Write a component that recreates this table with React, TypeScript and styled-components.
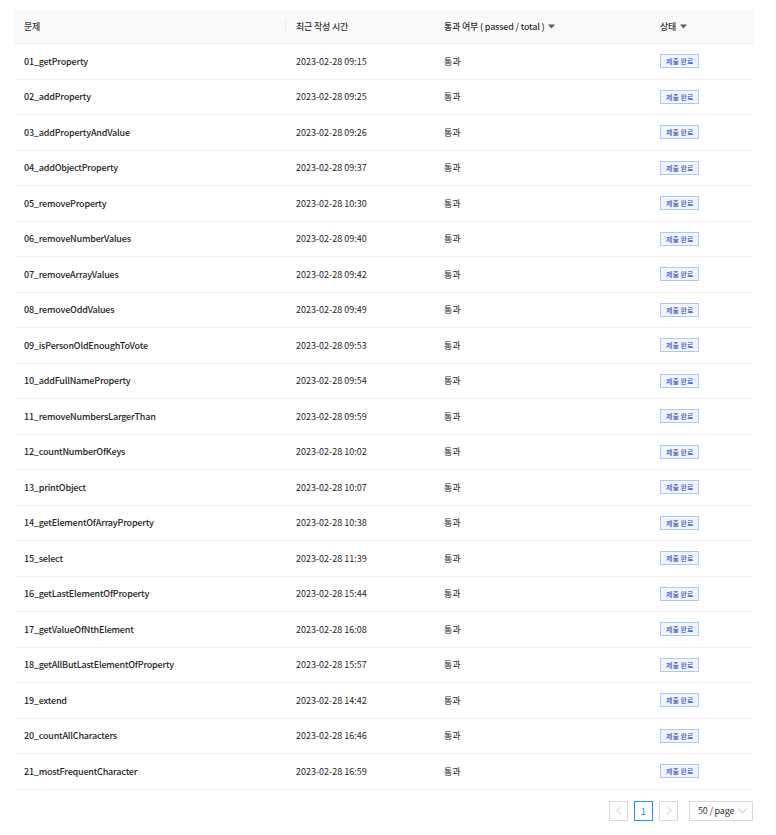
import React, { FC } from "react";
import styled, { createGlobalStyle } from "styled-components";

const rows: [string, string][] = [
  ["01_getProperty", "2023-02-28 09:15"],
  ["02_addProperty", "2023-02-28 09:25"],
  ["03_addPropertyAndValue", "2023-02-28 09:26"],
  ["04_addObjectProperty", "2023-02-28 09:37"],
  ["05_removeProperty", "2023-02-28 10:30"],
  ["06_removeNumberValues", "2023-02-28 09:40"],
  ["07_removeArrayValues", "2023-02-28 09:42"],
  ["08_removeOddValues", "2023-02-28 09:49"],
  ["09_isPersonOldEnoughToVote", "2023-02-28 09:53"],
  ["10_addFullNameProperty", "2023-02-28 09:54"],
  ["11_removeNumbersLargerThan", "2023-02-28 09:59"],
  ["12_countNumberOfKeys", "2023-02-28 10:02"],
  ["13_printObject", "2023-02-28 10:07"],
  ["14_getElementOfArrayProperty", "2023-02-28 10:38"],
  ["15_select", "2023-02-28 11:39"],
  ["16_getLastElementOfProperty", "2023-02-28 15:44"],
  ["17_getValueOfNthElement", "2023-02-28 16:08"],
  ["18_getAllButLastElementOfProperty", "2023-02-28 15:57"],
  ["19_extend", "2023-02-28 14:42"],
  ["20_countAllCharacters", "2023-02-28 16:46"],
  ["21_mostFrequentCharacter", "2023-02-28 16:59"],
];

const Caret: FC = () => (
  <svg width="7" height="5" viewBox="0 0 7 5">
    <path d="M0 0.5h7L3.5 4.5z" fill="#595959" />
  </svg>
);

const App: FC = () => (
  <>
    <GlobalStyle />
    <Page>
      <Table>
        <colgroup>
          <col style={{ width: 272 }} />
          <col style={{ width: 148 }} />
          <col style={{ width: 216 }} />
          <col style={{ width: 104 }} />
        </colgroup>
        <thead>
          <tr>
            <Th divider>문제</Th>
            <Th>최근 작성 시간</Th>
            <Th>
              <HeadInner>
                통과 여부 ( passed / total ) <Caret />
              </HeadInner>
            </Th>
            <Th>
              <HeadInner>
                상태 <Caret />
              </HeadInner>
            </Th>
          </tr>
        </thead>
        <tbody>
          {rows.map(([name, time]) => (
            <tr key={name}>
              <Td strong>{name}</Td>
              <Td>{time}</Td>
              <Td>통과</Td>
              <Td>
                <Tag>제출 완료</Tag>
              </Td>
            </tr>
          ))}
        </tbody>
      </Table>
      <Pagination>
        <PageButton>
          <svg width="6" height="9" viewBox="0 0 6 9">
            <path d="M5 0.5L1 4.5l4 4" fill="none" stroke="#bfbfbf" strokeWidth="1" />
          </svg>
        </PageButton>
        <PageButton active>1</PageButton>
        <PageButton>
          <svg width="6" height="9" viewBox="0 0 6 9">
            <path d="M1 0.5l4 4-4 4" fill="none" stroke="#bfbfbf" strokeWidth="1" />
          </svg>
        </PageButton>
        <SizeSelect>
          <span>50 / page</span>
          <svg width="9" height="6" viewBox="0 0 9 6">
            <path d="M0.5 0.5l4 4.5 4-4.5" fill="none" stroke="#bfbfbf" strokeWidth="1" />
          </svg>
        </SizeSelect>
      </Pagination>
    </Page>
  </>
);

export default App;

const GlobalStyle = createGlobalStyle`
  body {
    margin: 0;
    background: #fff;
    font-family: "Noto Sans CJK KR", "Noto Sans", sans-serif;
    color: rgba(0, 0, 0, 0.85);
  }
`;

const Page = styled.div`
  padding: 10px 22px 0 14px;
`;

const Table = styled.table`
  width: 740px;
  border-collapse: collapse;
  table-layout: fixed;
  font-size: 9px;
`;

const Th = styled.th<{ divider?: boolean }>`
  position: relative;
  height: 33px;
  padding: 0 10px;
  background: #fafafa;
  border-bottom: 1px solid #f0f0f0;
  text-align: left;
  font-weight: 500;
  letter-spacing: -0.2px;
  color: rgba(0, 0, 0, 0.85);

  &::after {
    content: "";
    display: ${(p) => (p.divider ? "block" : "none")};
    position: absolute;
    right: 0;
    top: 10px;
    width: 1px;
    height: 14px;
    background: #ebebeb;
  }
`;

const HeadInner = styled.span`
  display: inline-flex;
  align-items: center;
  gap: 4px;
`;

const Td = styled.td<{ strong?: boolean }>`
  height: 34.5px;
  padding: 0 10px;
  border-bottom: 1px solid #f0f0f0;
  font-weight: ${(p) => (p.strong ? 500 : 400)};
  letter-spacing: ${(p) => (p.strong ? "-0.2px" : "0")};
  color: #262626;
  white-space: nowrap;
`;

const Tag = styled.span`
  display: inline-block;
  padding: 0 5px;
  height: 14px;
  line-height: 13px;
  font-size: 7px;
  color: #1d39c4;
  background: #f0f5ff;
  border: 1px solid #adc6ff;
  box-sizing: border-box;
`;

const Pagination = styled.div`
  display: flex;
  justify-content: flex-end;
  align-items: center;
  width: 739px;
  margin-top: 11px;
  gap: 6px;
`;

const PageButton = styled.div<{ active?: boolean }>`
  display: flex;
  align-items: center;
  justify-content: center;
  width: 19px;
  height: 20px;
  box-sizing: border-box;
  border: 1px solid ${(p) => (p.active ? "#1890ff" : "#d9d9d9")};
  color: ${(p) => (p.active ? "#1890ff" : "#bfbfbf")};
  font-size: 9.5px;
`;

const SizeSelect = styled.div`
  display: flex;
  align-items: center;
  justify-content: space-between;
  margin-left: 5px;
  width: 64px;
  height: 20px;
  box-sizing: border-box;
  padding: 0 5px 0 8px;
  border: 1px solid #d9d9d9;
  font-size: 9px;
  letter-spacing: -0.2px;
  color: rgba(0, 0, 0, 0.85);
`;
